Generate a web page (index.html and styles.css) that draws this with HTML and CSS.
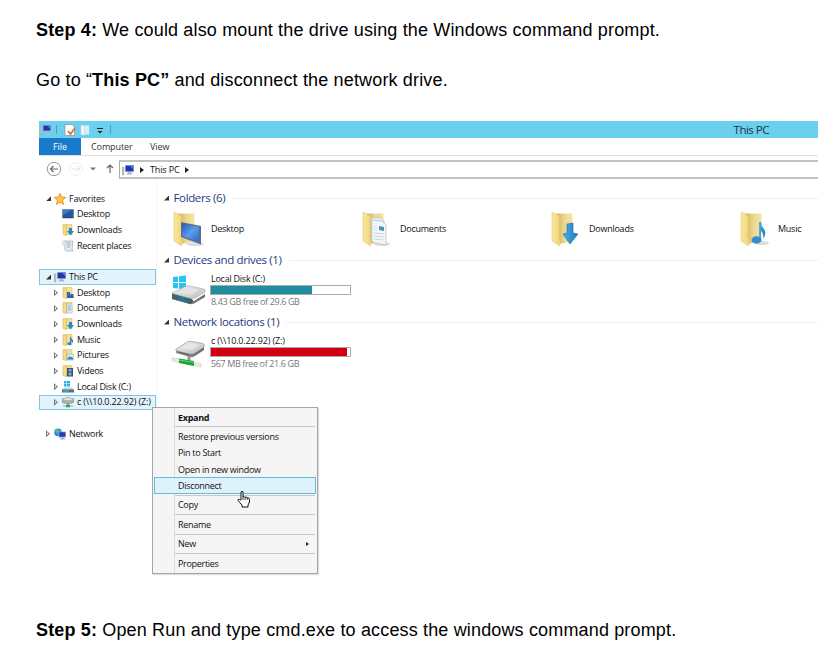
FILE: index.html
```html
<!DOCTYPE html>
<html lang="en">
<head>
<meta charset="utf-8">
<title>Mounting the drive</title>
<link rel="stylesheet" href="styles.css">
</head>
<body>
<svg class="defs" aria-hidden="true">
  <defs>
    <linearGradient id="gold" x1="0" x2="1"><stop offset="0" stop-color="#fbe89c"/><stop offset="1" stop-color="#f0d47c"/></linearGradient>
    <linearGradient id="goldback" x1="0" x2="1"><stop offset="0" stop-color="#cfae5c"/><stop offset=".5" stop-color="#ecd78f"/><stop offset="1" stop-color="#f5e5a4"/></linearGradient>
    <linearGradient id="screen" x1="0" x2="1" y2="1"><stop offset="0" stop-color="#2459b8"/><stop offset=".5" stop-color="#5c9cec"/><stop offset="1" stop-color="#2c69c4"/></linearGradient>
    <linearGradient id="blue" x1="0" x2="1"><stop offset="0" stop-color="#49b2ea"/><stop offset="1" stop-color="#1c77bd"/></linearGradient>
    <linearGradient id="metal" x1="0" x2="1" y2="1"><stop offset="0" stop-color="#f2f2f2"/><stop offset="1" stop-color="#bdbdbd"/></linearGradient>
    <linearGradient id="front" x1="0" x2="1"><stop offset="0" stop-color="#53595c"/><stop offset=".5" stop-color="#28788e"/><stop offset="1" stop-color="#4b5154"/></linearGradient>
    <linearGradient id="side" x1="0" x2="1"><stop offset="0" stop-color="#8d9092"/><stop offset="1" stop-color="#6b6e70"/></linearGradient>
  </defs>
  <symbol id="folder" viewBox="0 0 32 36">
    <path d="M5 2.500H21.500V30L9 33Z" fill="url(#goldback)"/>
    <path d="M1 1L8.500 5V35L1 30Z" fill="url(#gold)" stroke="#dfc06a" stroke-width=".5"/>
  </symbol>
  <symbol id="f-desktop" viewBox="0 0 32 36">
    <ellipse cx="22" cy="33" rx="9" ry="2" fill="#ddd"/><use href="#folder"/>
    <path d="M8 11L28 15V33.500L8 26Z" fill="#56718c"/><path d="M9 12.500L26 16V31L9 25Z" fill="url(#screen)"/>
  </symbol>
  <symbol id="f-docs" viewBox="0 0 32 36">
    <ellipse cx="20" cy="33" rx="8" ry="2" fill="#ddd"/><use href="#folder"/>
    <path d="M9 7L18 6.500L22 10V31L9 29Z" fill="#e9edf0" stroke="#b2babf" stroke-width=".6"/>
    <path d="M10 9L20 10L24 14V34L10 31Z" fill="#f4f7f9" stroke="#a7b0b6" stroke-width=".6"/>
    <path d="M17 15L22 16V20L17 19Z" fill="#4695bd"/><path d="M12 16H15M12 19H15M12 22L22 23M12 25L22 26M12 28L22 29" stroke="#c4cdd2" stroke-width=".8"/>
  </symbol>
  <symbol id="f-down" viewBox="0 0 32 36">
    <use href="#folder"/><path d="M16 13L22 12V22L27 23L19 33L12 23L16 22Z" fill="url(#blue)" stroke="#1a70b0" stroke-width=".6"/>
  </symbol>
  <symbol id="f-music" viewBox="0 0 32 36">
    <ellipse cx="22" cy="32" rx="7" ry="2" fill="#ddd"/><use href="#folder"/>
    <path d="M19 11H21Q21 15 24 18Q27 23 23 28Q24 22 21 20V29H19Z" fill="url(#blue)"/>
    <ellipse cx="16.500" cy="29" rx="5" ry="3.700" fill="#2d8ecb"/>
  </symbol>
  <symbol id="pc" viewBox="0 0 12 12">
    <path d="M0 3H2V11H0Z" fill="#bcc0c2" stroke="#8d9398" stroke-width=".3"/><path d="M3 1H12V8H3Z" fill="#9fb4cf"/><path d="M3.700 1.700H11.300V7.200H3.700Z" fill="#2433b0"/><path d="M8 1.700H11.300V5.500Z" fill="#4f82e8"/><path d="M6 8H9L10.500 10.500H4.500Z" fill="#aab8c6"/>
  </symbol>
  <symbol id="star" viewBox="0 0 12 12"><path d="M6 .5L7.600 4L11.700 4.400L8.600 7.100L9.500 11.400L6 9.100L2.500 11.400L3.400 7.100L.3 4.400L4.400 4Z" fill="#ffc847" stroke="#ed8b2d" stroke-width=".9"/></symbol>
  <symbol id="desk" viewBox="0 0 12 12"><path d="M.5 1.500H11.500V10H.5Z" fill="#2456a3" stroke="#617f9e" stroke-width=".7"/><path d="M1 2H9L1 7Z" fill="#4379c5"/><path d="M1 9H11V10H1Z" fill="#344761"/></symbol>
  <symbol id="sf" viewBox="0 0 12 12"><path d="M3 .5H10V10.500H3Z" fill="#f5df96" stroke="#d9bb66" stroke-width=".6"/><path d="M1 .5L4.500 1.500V11.700L1 10.500Z" fill="#f6dc86" stroke="#cda94c" stroke-width=".5"/></symbol>
  <symbol id="s-desk" viewBox="0 0 12 12"><use href="#sf"/><path d="M5 5H8V7H11.500V11H5Z" fill="#2c6fbd"/><path d="M5 9H11.500V11H5Z" fill="#376092"/></symbol>
  <symbol id="s-docs" viewBox="0 0 12 12"><use href="#sf"/><path d="M5 2H10V11H5Z" fill="#e8f0f5" stroke="#94acb9" stroke-width=".5"/><path d="M6 4H9M6 6H9M6 8H9" stroke="#5690b8" stroke-width=".7"/></symbol>
  <symbol id="s-down" viewBox="0 0 12 12"><use href="#sf"/><path d="M7 4H10V7H12L8.500 11.500L5 7H7Z" fill="#258bcd"/></symbol>
  <symbol id="s-music" viewBox="0 0 12 12"><use href="#sf"/><path d="M8 3H9Q9 5 11 6V9L9 7V10H8Z" fill="#258bcd"/><ellipse cx="7.500" cy="9.700" rx="2" ry="1.600" fill="#258bcd"/></symbol>
  <symbol id="s-pics" viewBox="0 0 12 12"><use href="#sf"/><path d="M5 5H11.500V11H5Z" fill="#d6edf4" stroke="#8dadb8" stroke-width=".5"/><path d="M5.500 9Q8 6 11 9V10.500H5.500Z" fill="#388aad"/></symbol>
  <symbol id="s-vids" viewBox="0 0 12 12"><use href="#sf"/><path d="M5 3H11V11.500H5Z" fill="#37506a"/><path d="M6.500 4H9.500V6.500H6.500ZM6.500 7.500H9.500V10.500H6.500Z" fill="#71a9d6"/></symbol>
  <symbol id="recent" viewBox="0 0 12 12"><path d="M3 1H11L10 9L11.500 11H4Q2 9 3 7Z" fill="#e7edf1" stroke="#91a0a8" stroke-width=".6"/><path d="M5 3H9M5 5H9M5 7H8" stroke="#6fa1b7" stroke-width=".7"/><circle cx="2.700" cy="3" r="2.300" fill="#f1f3f4" stroke="#a5adb2" stroke-width=".5"/><path d="M2.700 1.500V3H4" fill="none" stroke="#888" stroke-width=".4"/></symbol>
  <symbol id="disk" viewBox="0 0 12 12"><path d="M2 0H4.500V2.500H2ZM5 0H8V2.500H5ZM2 3H4.500V5.500H2ZM5 3H8V5.500H5Z" fill="#22b9e8"/><path d="M2 6.500H10L12 9H0Z" fill="#ccd2d5"/><path d="M0 8.500H12V11.500H0Z" fill="#44727e"/><path d="M1 9.500H7V10.500H1Z" fill="#58bdd0"/></symbol>
  <symbol id="netdisk" viewBox="0 0 12 12"><path d="M0 3Q6 0 12 3V6Q10 7.500 6 7.500Q1 7.500 0 6Z" fill="#aeb1b3" stroke="#777b7e" stroke-width=".5"/><path d="M.8 3.200Q6 1 11.200 3.200Q6 5.500 .8 3.200Z" fill="#e2e3e4"/><path d="M6 7V9" stroke="#777" stroke-width="1"/><path d="M1 10H11" stroke="#bbc5bd" stroke-width="1.500"/><path d="M4 10H8" stroke="#31ac3f" stroke-width="2.500"/></symbol>
  <symbol id="network" viewBox="0 0 12 12"><circle cx="4" cy="4.300" r="3.900" fill="#2a91d8"/><path d="M2 1L5 2L3 5L1 4Z" fill="#68c566"/><path d="M4.500 3.500H12V9.500H4.500Z" fill="#a4bcd5"/><path d="M5.200 4.200H11.300V8.800H5.200Z" fill="#253bb4"/><path d="M7 9.500H10L11 11.500H6Z" fill="#9eacba"/></symbol>
</svg>

<main class="page">
  <p class="step"><b>Step 4:</b> We could also mount the drive using the Windows command prompt.</p>
  <p class="step goto">Go to “<b>This PC”</b> and disconnect the network drive.</p>

  <section class="window">
    <header class="titlebar">
      <svg class="qa"><use href="#pc"/></svg><i class="qsep"></i>
      <svg class="qdoc" viewBox="0 0 12 12"><path d="M1 .5H8L10.500 3V11.500H1Z" fill="#fff" stroke="#868f94" stroke-width=".7"/><path d="M4 7L6.500 10L11 4" fill="none" stroke="#e56f35" stroke-width="1.800"/></svg>
      <svg class="qfold" viewBox="0 0 12 12"><path d="M1 1H10V11H1Z" fill="#d8eff8"/><path d="M1 .5L4.500 2V12L1 10.500Z" fill="#f4fafc" stroke="#adcfdf" stroke-width=".5"/></svg>
      <svg class="qmore" viewBox="0 0 6 6"><path d="M0 .5H6" stroke="#222"/><path d="M.5 3H5.500L3 5.500Z" fill="#222"/></svg><i class="qsep"></i>
      <span class="wtitle">This PC</span>
    </header>
    <nav class="tabs"><span class="file">File</span><span class="computer">Computer</span><span>View</span></nav>
    <div class="toolbar">
      <svg class="arrows" viewBox="0 0 80 20">
        <circle cx="15" cy="10" r="6.700" fill="#fff" stroke="#8b8b8b" stroke-width=".9"/><path d="M19 10H11.500M14.500 7L11.500 10L14.500 13" fill="none" stroke="#666" stroke-width="1.200"/>
        <circle cx="37" cy="10" r="6.300" fill="none" stroke="#e6e6e6" stroke-width=".8"/><path d="M33 10H41M38 7L41 10L38 13" fill="none" stroke="#e4e4e4"/>
        <path d="M51 8.500H57L54 11.500Z" fill="#777"/><path d="M71 14V6M68 9L71 6L74 9" fill="none" stroke="#666" stroke-width="1.200"/>
      </svg>
      <div class="address"><svg class="icon"><use href="#pc"/></svg><i class="right"></i><span>This PC</span><i class="right"></i></div>
    </div>
    <div class="body">
      <aside class="tree">
        <div class="row top"><i class="open"></i><svg class="icon"><use href="#star"/></svg><span>Favorites</span></div>
        <div class="row"><i></i><svg class="icon"><use href="#desk"/></svg><span>Desktop</span></div>
        <div class="row"><i></i><svg class="icon"><use href="#s-down"/></svg><span>Downloads</span></div>
        <div class="row"><i></i><svg class="icon"><use href="#recent"/></svg><span>Recent places</span></div>
        <div class="row"></div>
        <div class="row top selected"><i class="open"></i><svg class="icon"><use href="#pc"/></svg><span>This PC</span></div>
        <div class="row"><i class="closed"></i><svg class="icon"><use href="#s-desk"/></svg><span>Desktop</span></div>
        <div class="row"><i class="closed"></i><svg class="icon"><use href="#s-docs"/></svg><span>Documents</span></div>
        <div class="row"><i class="closed"></i><svg class="icon"><use href="#s-down"/></svg><span>Downloads</span></div>
        <div class="row"><i class="closed"></i><svg class="icon"><use href="#s-music"/></svg><span>Music</span></div>
        <div class="row"><i class="closed"></i><svg class="icon"><use href="#s-pics"/></svg><span>Pictures</span></div>
        <div class="row"><i class="closed"></i><svg class="icon"><use href="#s-vids"/></svg><span>Videos</span></div>
        <div class="row"><i class="closed"></i><svg class="icon"><use href="#disk"/></svg><span>Local Disk (C:)</span></div>
        <div class="row selected"><i class="closed"></i><svg class="icon"><use href="#netdisk"/></svg><span class="share">c (\\10.0.22.92) (Z:)</span></div>
        <div class="row"></div>
        <div class="row top"><i class="closed"></i><svg class="icon"><use href="#network"/></svg><span>Network</span></div>
      </aside>
      <div class="content">
        <h2><i class="open"></i><span>Folders (6)</span></h2>
        <div class="folders">
          <div class="tile"><svg><use href="#f-desktop"/></svg><span>Desktop</span></div>
          <div class="tile"><svg><use href="#f-docs"/></svg><span>Documents</span></div>
          <div class="tile"><svg><use href="#f-down"/></svg><span>Downloads</span></div>
          <div class="tile"><svg><use href="#f-music"/></svg><span>Music</span></div>
        </div>
        <h2><i class="open"></i><span>Devices and drives (1)</span></h2>
        <div class="drive">
          <svg viewBox="0 0 36 34">
            <path d="M2 3L7 2.500V8H2ZM8 2.300L15 1.500V8H8ZM2 9H7V14.500L2 14ZM8 9H15V15.500L8 14.700Z" fill="#25c5ef"/>
            <path d="M1 20L23 27L34 20V23L24 29Q22 30.500 19 30L1 25Z" fill="url(#side)"/>
            <path d="M1 19L14 12.500Q16 11.500 19 12L33 15Q35 16 34 18L24 24Q22 25 19 24.500Z" fill="url(#metal)" stroke="#999" stroke-width=".5"/>
            <path d="M8 18L17 13.500L28 16L20 21Z" fill="#e4e4e4"/>
            <path d="M1 19.500L19 24.500Q22 25 22 27Q21 30 19 30L1 25Z" fill="url(#front)"/>
          </svg>
          <div><span>Local Disk (C:)</span><div class="meter"><div class="used teal"></div></div><span class="free">8.43 GB free of 29.6 GB</span></div>
        </div>
        <h2><i class="open"></i><span>Network locations (1)</span></h2>
        <div class="drive">
          <svg viewBox="0 0 36 34">
            <path d="M5 14L22 18L33 11V14L24 20Q22 21.500 19 21L5 17Z" fill="url(#side)"/>
            <path d="M5 13L16 6Q18 5 21 5.500L32 7.500Q34 8.500 33 11L24 17Q22 18.500 19 18L6 15Q4 14 5 13Z" fill="url(#metal)" stroke="#888" stroke-width=".6"/>
            <path d="M10 12L18 7L28 9L20 14Z" fill="#e6e6e6"/><path d="M7 16L18 18.800" stroke="#555" stroke-width=".8"/>
            <path d="M18 20V25" stroke="#8c9890" stroke-width="3"/>
            <path d="M1 22L9 23V27L1 25ZM22 26L30 27.500V31L22 29Z" fill="#e6ebe8" stroke="#b5beb8" stroke-width=".4"/>
            <path d="M8 22.500L23 25V30L8 27Z" fill="#15a536"/><path d="M8 24L23 26.500" stroke="#6bd27e"/>
          </svg>
          <div><span class="share">c (\\10.0.22.92) (Z:)</span><div class="meter"><div class="used red"></div></div><span class="free">567 MB free of 21.6 GB</span></div>
        </div>
      </div>
    </div>
    <div class="menu">
      <div class="item"><b>Expand</b></div><hr>
      <div class="item">Restore previous versions</div>
      <div class="item">Pin to Start</div>
      <div class="item">Open in new window</div>
      <div class="item hover">Disconnect</div><hr>
      <div class="item">Copy</div><hr>
      <div class="item">Rename</div><hr>
      <div class="item">New<i class="right"></i></div><hr>
      <div class="item">Properties</div>
      <svg class="hand" viewBox="0 0 14 18"><path d="M4 10V2Q5 .3 6 2V7Q7 5.500 8 7.500Q9.500 6 10.200 8Q12.500 7.300 12.500 9.500V12L11 15V17H5V15L1 10.500Q1 8.500 2.500 9.500Z" fill="#fff" stroke="#111" stroke-width="1"/><path d="M6 7V10M8 7.500V10M10.200 8V10" stroke="#111" stroke-width=".8"/></svg>
    </div>
  </section>

  <p class="step last"><b>Step 5:</b> Open Run and type cmd.exe to access the windows command prompt.</p>
</main>
</body>
</html>
```

FILE: styles.css
```css
* { box-sizing: border-box; }
body { margin: 0; background: #fff; color: #000; overflow: hidden; }
.defs { position: absolute; width: 0; height: 0; }
.page { width: 837px; height: 666px; padding: 18px 19px 0 36px; }
.step { margin: 0; height: 24px; font: 18px/24px "Liberation Sans", Arial, sans-serif; white-space: nowrap; letter-spacing: 0.155px; }
.goto { margin-top: 26px; }
.window { position: relative; width: 779px; height: 453px; margin: 29px 0 0 3px; font: 9px/12px "Open Sans", "Noto Sans", sans-serif; letter-spacing: -0.25px; color: #111; white-space: nowrap; }
.window svg { flex: none; display: block; }
.icon { width: 12px; height: 12px; }
.titlebar { display: flex; align-items: center; height: 17px; padding-left: 1px; background: #6bd0ed; }
.qa { width: 11px; height: 11px; }
.qa use { width: 11px; height: 11px; }
.qsep { width: 1px; height: 9px; margin: 0 7px 0 5px; background: #4a9fba; }
.qdoc { width: 12px; height: 12px; }
.qfold { width: 11px; height: 12px; margin-left: 4px; }
.qmore { width: 6px; height: 6px; margin: 2px 2px 0 6px; }
.wtitle { margin-left: auto; margin-right: 49px; font-size: 11.5px; letter-spacing: -0.5px; color: #234; }
.tabs { display: flex; align-items: center; height: 18px; border-bottom: 1px solid #dfe1e3; letter-spacing: -0.1px; line-height: 18px; color: #333; }
.file { width: 42px; height: 17px; margin-right: 10px; background: #1979ca; color: #fff; text-align: center; }
.computer { width: 59px; }
.toolbar { display: flex; height: 23px; padding-top: 4px; }
.arrows { width: 80px; height: 20px; margin-top: -1px; }
.address { flex: 1; display: flex; align-items: center; height: 19px; padding-left: 2px; border: 1px solid #b4b4b4; border-width: 2px 0 2px 1px; border-color: #c2c2c2 #aaa #c2c2c2 #aaa; letter-spacing: -0.15px; }
.address .right { margin: 0 6px; border-width: 3px 0 3px 4px; }
.right { width: 0; height: 0; border: 2.5px solid transparent; border-left: 3px solid #222; border-right: 0; }
.body { display: flex; height: 395px; }
.tree { width: 118px; padding-top: 12px; border-right: 1px solid #f3f6f8; }
.row { display: flex; align-items: center; height: 15.67px; padding-left: 14px; border: 1px solid transparent; }
.row > i { width: 5px; margin-right: 3px; flex: none; }
.row .icon { margin-right: 3px; }
.row.top { padding-left: 6px; }
.row.selected { width: 117px; border-color: #87c4e0; background: #e1f3fc; }
.share { letter-spacing: -0.15px; }
.open { width: 5px; height: 5px; background: #333; clip-path: polygon(100% 0, 100% 100%, 0 100%); }
.closed { width: 5px; height: 7px; background: #777; clip-path: polygon(0 0, 80% 50%, 0 100%, 0 75%, 50% 50%, 20% 25%, 20% 75%, 0 100%); }
.content { flex: 1; min-width: 0; padding: 9px 0 0 7px; }
.content h2 { display: flex; align-items: center; height: 20px; margin: 0; font-size: 11.5px; font-weight: 400; line-height: 20px; letter-spacing: -0.36px; color: #233b82; }
.content h2 .open { margin-right: 4px; }
.content h2 span { padding-left: 0.5px; }
.content h2::after { content: ""; flex: 1; height: 1px; margin-left: 7px; background: #e4f1f5; }
.folders { display: grid; grid-template-columns: repeat(4, 189px); height: 42px; overflow: hidden; }
.tile { display: flex; align-items: center; padding-left: 9px; }
.tile svg { width: 32px; height: 36px; margin-right: 6px; }
.drive { display: flex; height: 42px; }
.drive > svg { width: 36px; height: 34px; margin: 4px 3px 0 7px; }
.drive span { display: block; height: 15px; padding-left: 1px; line-height: 18px; }
.meter { width: 141px; height: 10px; border: 1px solid #aaa; background: #fff; }
.used { height: 8px; }
.teal { width: 101px; background: #218e9f; }
.red { width: 136px; background: #d00012; }
.drive .free { color: #777; line-height: 13px; letter-spacing: -0.38px; }
.menu { position: absolute; left: 113px; top: 286px; width: 166px; height: 167px; padding: 1px; border: 1px solid #a5a5a5; background: linear-gradient(90deg, transparent 21px, #ddd 21px, #ddd 22px, transparent 22px), #f5f5f5; box-shadow: 1px 1px 1px #ddd; letter-spacing: -0.3px; }
.item { display: flex; align-items: center; justify-content: space-between; height: 16.35px; padding: 1px 7px 0 24px; }
.hover { background: #def2fc; outline: 1px solid #63bdd9; outline-offset: -1px; }
.menu hr { height: 1px; margin: 1px 1px 1.05px 21px; border: 0; background: #c8c8c8; }
.hand { position: absolute; left: 84px; top: 82px; width: 14px; height: 18px; }
.last { margin-top: 44px; }
```
